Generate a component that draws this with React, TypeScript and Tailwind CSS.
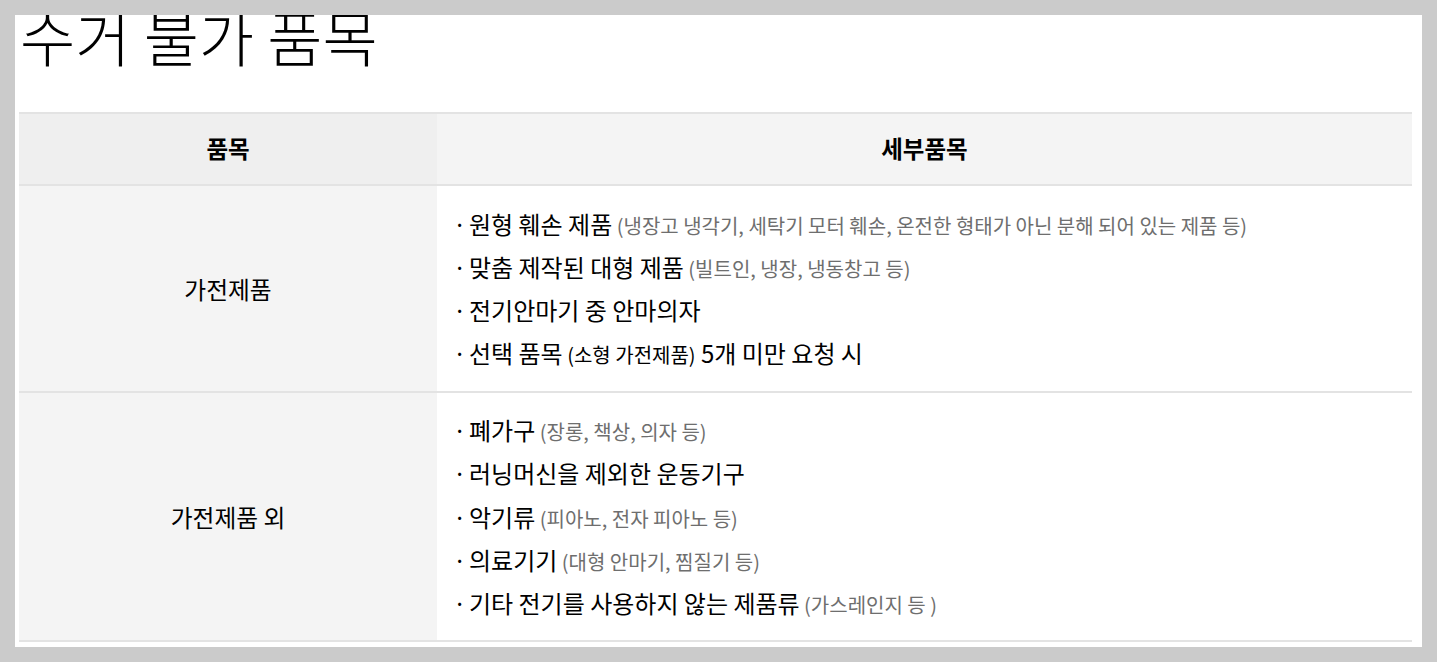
import React from "react";

type Item = { main: string; sub?: string; mid?: string; tail?: string };

const row1: Item[] = [
  { main: "원형 훼손 제품", sub: "(냉장고 냉각기, 세탁기 모터 훼손, 온전한 형태가 아닌 분해 되어 있는 제품 등)" },
  { main: "맞춤 제작된 대형 제품", sub: "(빌트인, 냉장, 냉동창고 등)" },
  { main: "전기안마기 중 안마의자" },
  { main: "선택 품목", mid: "(소형 가전제품)", tail: "5개 미만 요청 시" },
];

const row2: Item[] = [
  { main: "폐가구", sub: "(장롱, 책상, 의자 등)" },
  { main: "러닝머신을 제외한 운동기구" },
  { main: "악기류", sub: "(피아노, 전자 피아노 등)" },
  { main: "의료기기", sub: "(대형 안마기, 찜질기 등)" },
  { main: "기타 전기를 사용하지 않는 제품류", sub: "(가스레인지 등 )" },
];

function List({ items, h }: { items: Item[]; h: string }) {
  return (
    <div className={`flex flex-col justify-center pl-[16px] ${h}`}>
      {items.map((it, i) => (
        <div key={i} className="flex h-[43.25px] items-center whitespace-nowrap text-[24px] leading-none text-black">
          <span className="inline-block w-[16px] shrink-0">·</span>
          <span>
            <span>{it.main}</span>
            {it.sub && <span className="text-[20px] leading-none text-[#6e6e6e]"> {it.sub}</span>}
            {it.mid && <span className="text-[20px] leading-none text-black"> {it.mid}</span>}
            {it.tail && <span> {it.tail}</span>}
          </span>
        </div>
      ))}
    </div>
  );
}

export default function App() {
  return (
    <div className="h-[662px] w-full bg-[#cbcbcb] p-[15px] font-['Noto_Sans_CJK_KR',sans-serif]">
      <div className="flex h-[632px] w-[1407px] flex-col overflow-hidden bg-white pl-[4px]">
        <div className="h-[97px] shrink-0">
          <div className="pl-[1px] text-[60px] font-light leading-[42px] text-black">수거 불가 품목</div>
        </div>
        <div className="grid w-[1393px] grid-cols-[418px_975px] border-t-2 border-[#e3e3e3]">
          <div className="flex h-[70px] items-center justify-center bg-[#efefef] text-[23.5px] font-bold text-black">품목</div>
          <div className="flex h-[70px] items-center justify-center bg-[#f4f4f4] text-[23.5px] font-bold text-black">세부품목</div>
          <div className="col-span-2 h-[2px] bg-[#e3e3e3]" />
          <div className="flex items-center justify-center bg-[#f4f4f4] text-[23.75px] text-black">가전제품</div>
          <div className="bg-white">
            <List items={row1} h="h-[205px]" />
          </div>
          <div className="col-span-2 h-[2px] bg-[#e3e3e3]" />
          <div className="flex items-center justify-center bg-[#f4f4f4] text-[23.75px] text-black">가전제품 외</div>
          <div className="bg-white">
            <List items={row2} h="h-[247px]" />
          </div>
          <div className="col-span-2 h-[2px] bg-[#e3e3e3]" />
        </div>
      </div>
    </div>
  );
}
